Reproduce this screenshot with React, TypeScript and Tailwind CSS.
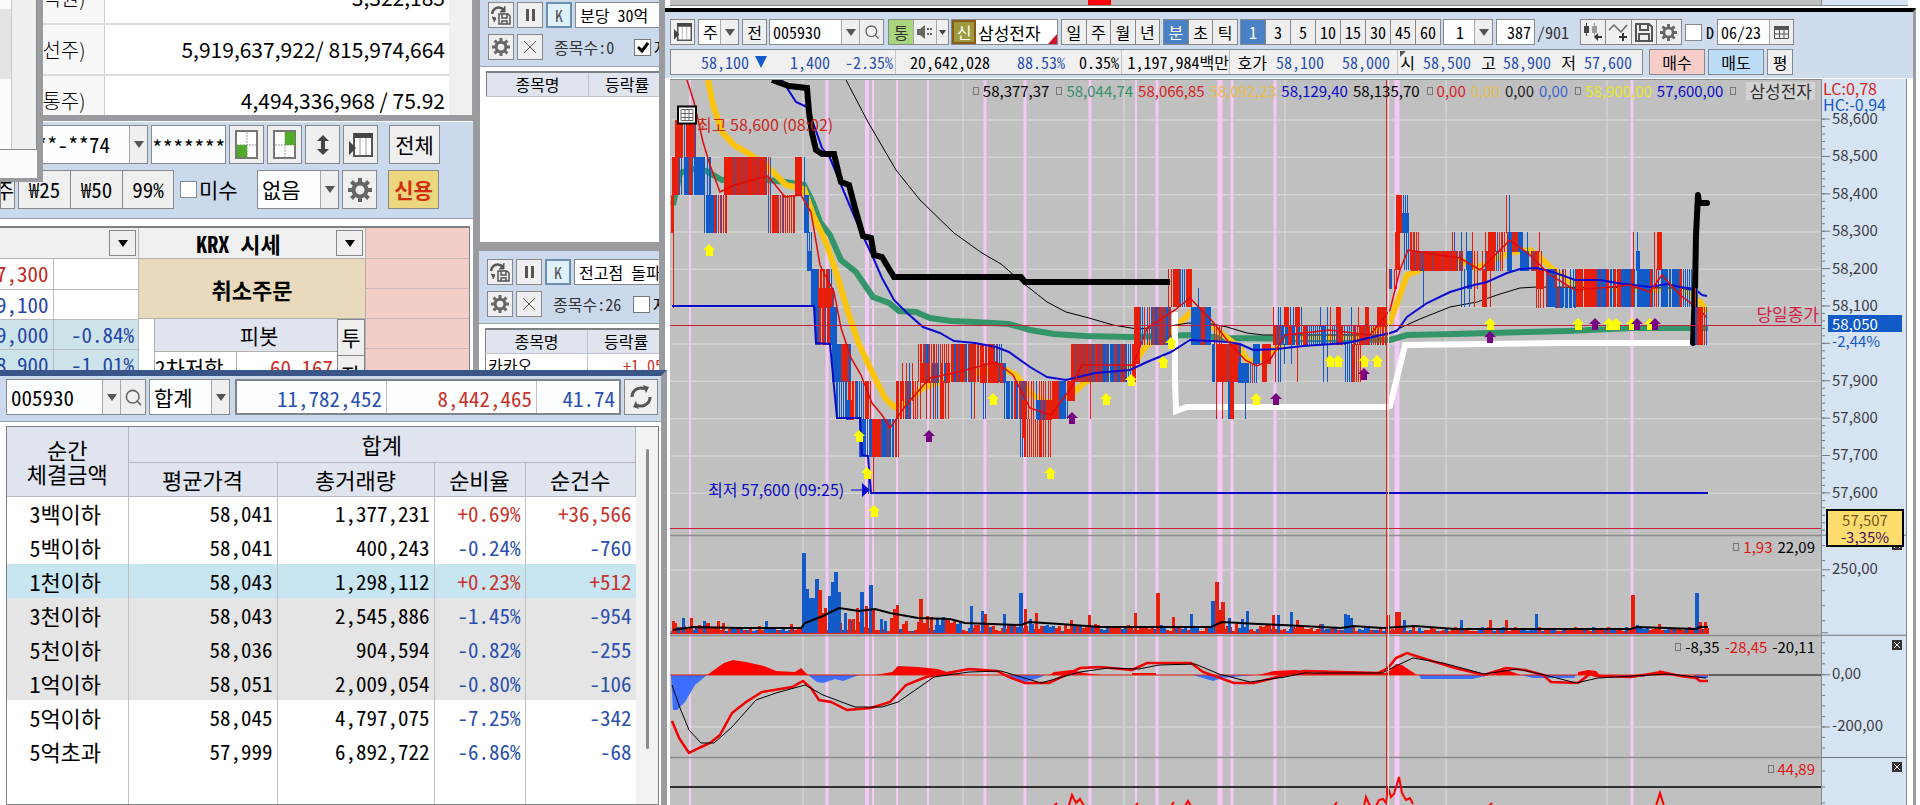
import type { ReactNode } from "react";
import { Search } from "lucide-react";

const SANS = "font-['Noto_Sans_CJK_KR',sans-serif]";

const BTN = "flex shrink-0 items-center justify-center border border-[#85888d] bg-[#efefef]";

const RED = "#e61e0a";
const BLUE = "#125ac8";
const MIX = "#96384e";

/* ---------- icons ---------- */

function Arrow({ className = "fill-[#555]" }: { className?: string }) {
  return (
    <svg width="10" height="7" viewBox="0 0 10 7" className={className}>
      <path d="M0 0h10L5 7z" />
    </svg>
  );
}

function Gear({ size = 18 }: { size?: number }) {
  return (
    <svg width={size} height={size} viewBox="0 0 24 24">
      <circle cx="12" cy="12" r="6.5" fill="none" stroke="#666" strokeWidth="4" />
      {[0, 45, 90, 135].map((a) => (
        <path key={a} d="M10 0h4v5h-4zM10 19h4v5h-4z" fill="#666" transform={`rotate(${a} 12 12)`} />
      ))}
    </svg>
  );
}

function PanelIcon({ size = 18 }: { size?: number }) {
  return (
    <svg width={size} height={size} viewBox="0 0 24 24">
      <path d="M5 1h18v22H5z" fill="#fff" stroke="#555" strokeWidth="2" />
      <path d="M5 0h19v5H5zM0 8l7 7-7 7z" fill="#444" />
      <path d="M11 5v17M17 5v17" stroke="#999" />
    </svg>
  );
}

function QuadIcon({ corner }: { corner: "bl" | "tr" }) {
  return (
    <svg width="24" height="30" viewBox="0 0 24 30">
      <path d="M1 1h21v27H1z" fill="#fff" stroke="#777" strokeWidth="2" />
      <path d="M12 2v25M2 15h19" stroke="#999" strokeDasharray="2 1" />
      <path d={corner === "bl" ? "M2 15h10v12H2z" : "M12 2h10v13H12z"} fill="#4ead24" />
    </svg>
  );
}

function ReloadSave() {
  return (
    <svg width="20" height="20" viewBox="0 0 20 20" fill="none" stroke="#555">
      <path d="M1 9c1-6 7-9 12-4" strokeWidth="2.5" />
      <path d="M14 1v6H9M1 12l4 1-2 4" fill="#555" />
      <path d="M8 9h9l2 2v8H8zM11 9v4h5V9M11 19v-3h5v3" strokeWidth="1.5" />
    </svg>
  );
}

function Save() {
  return (
    <svg width="18" height="19" viewBox="0 0 18 19" fill="none" stroke="#555" strokeWidth="2">
      <path d="M1 1h13l3 3v14H1zM5 1v6h8V1M4 18v-7h10v7" />
    </svg>
  );
}

function CandleAdd() {
  return (
    <svg width="20" height="20" viewBox="0 0 20 20">
      <path d="M1 4h5v7H1zM3 1h1v13H3z" fill="#444" />
      <path d="M9 4h5v7H9zM11 1h1v13h-1z" fill="#999" />
      <path d="M11 15l4-4v3h4v2h-4v3z" fill="#333" />
    </svg>
  );
}

function LineAdd() {
  return (
    <svg width="20" height="20" viewBox="0 0 20 20">
      <path d="M1 8l5-5 7 7 6-7" fill="none" stroke="#666" strokeWidth="1.5" />
      <path d="M11 14h3v-3h2v3h3v2h-3v3h-2v-3h-3z" fill="#333" />
    </svg>
  );
}

function Calendar() {
  return (
    <svg width="15" height="14" viewBox="0 0 15 14" fill="none" stroke="#555">
      <path d="M0 1h15v4H0z" fill="#555" stroke="none" />
      <path d="M.5 1.500h14v12H.5zM5.500 5v8M10 5v8M0 9h15" />
    </svg>
  );
}

function Refresh() {
  return (
    <svg width="24" height="26" viewBox="0 0 24 26" fill="none" stroke="#555" strokeWidth="3">
      <path d="M3 13c0-7 7-11 13-8M21 13c0 7-7 11-13 8" />
      <path d="M14 1l6 2-3 6zM10 25l-6-2 3-6z" fill="#555" stroke="none" />
    </svg>
  );
}

function Speaker() {
  return (
    <svg width="16" height="16" viewBox="0 0 16 16" fill="#666">
      <path d="M0 5h3l5-4v14l-5-4H0zM10 4h2v2h-2zM10 9h2v2h-2zM13 4h2v2h-2zM13 9h2v2h-2z" />
    </svg>
  );
}

/* ---------- small controls ---------- */

function Combo({ label, value, className }: { label: string; value: string; className: string }) {
  return (
    <div className={`flex shrink-0 border border-[#85888d] bg-[#fdfeff] ${className}`}>
      <select aria-label={label} className="min-w-0 flex-1 appearance-none bg-transparent pl-1 leading-none outline-none">
        <option>{value}</option>
      </select>
      <span className="flex w-[18px] items-center justify-center border-l border-[#a5a8ad] bg-[#efefef]">
        <Arrow />
      </span>
    </div>
  );
}

/* ---------- background windows ---------- */

function ShareInfo() {
  const rows = [
    ["(억원)", "3,322,185"],
    ["(우선주)", "5,919,637,922/ 815,974,664"],
    ["(보통주)", "4,494,336,968 / 75.92"],
  ];
  return (
    <section className="absolute top-0 left-0 h-[120px] w-[476px] overflow-hidden border-r-4 border-[#9a9c9f] bg-[#f0f0f0]">
      <table className={`-mt-[27px] w-[449px] table-fixed text-[21px] text-black ${SANS}`}>
        <tbody>
          {rows.map(([k, v]) => (
            <tr key={k} className="h-[51px] border-b-2 border-[#dcdcdc]">
              <th className="w-[104px] border-r border-[#d0d0d0] bg-[#f8f8f8] pr-[18px] text-right text-[20px] font-light whitespace-nowrap">
                <span className="flex justify-end">{k}</span>
              </th>
              <td className="bg-white pr-1 text-right">{v}</td>
            </tr>
          ))}
        </tbody>
      </table>
    </section>
  );
}

function ScrollPopup() {
  return (
    <section className="absolute top-0 left-0 flex h-[182px] w-[43px] flex-col border-r-6 border-b-4 border-[#999b9e] bg-[#fcfcfc]">
      <div className="flex h-[150px] border-r border-b border-[#8a8a8a]">
        <div className="flex w-3 flex-col border-r border-[#c8c8c8] pt-[9px]">
          <div className="h-[70px] bg-[#e4e4e4]" />
        </div>
        <div className="flex-1 bg-[#efefef]" />
      </div>
    </section>
  );
}

function OrderWindow() {
  const quotes = [
    { price: "57,300", rate: "", tone: "text-[#c02a22]", bg: "bg-white" },
    { price: "59,100", rate: "", tone: "text-[#2545a8]", bg: "bg-white" },
    { price: "59,000", rate: "-0.84%", tone: "text-[#2545a8]", bg: "bg-[#cde3ea]" },
    { price: "58,900", rate: "-1.01%", tone: "text-[#2545a8]", bg: "bg-[#cde3ea]" },
  ];
  return (
    <section className="absolute top-[115px] left-0 h-[260px] w-[479px] overflow-hidden border-t-6 border-r-6 border-[#999b9e] bg-white text-[21px] leading-none">
      <div className="flex flex-col gap-[6px] border-t border-b border-t-white border-b-[#9aa0a8] bg-[#cbd9ec] pt-[3px] pb-[9px]">
        <div className="flex h-[39px] gap-[3px]">
          <Combo label="계좌번호" value="**-**-**74" className="w-[148px]" />
          <input aria-label="비밀번호" defaultValue="*******" className="w-[75px] border border-[#85888d] bg-[#fdfeff] pt-1 text-center" />
          <button aria-label="왼쪽 아래" className={`${BTN} w-[35px]`}><QuadIcon corner="bl" /></button>
          <button aria-label="오른쪽 위" className={`${BTN} w-[35px]`}><QuadIcon corner="tr" /></button>
          <button aria-label="높이 조절" className={`${BTN} w-[35px]`}>
            <svg width="14" height="20" viewBox="0 0 14 20" fill="#444"><path d="M7 0l6 6H9v8h4l-6 6-6-6h4V6H1z" /></svg>
          </button>
          <button aria-label="패널" className={`${BTN} w-[35px]`}><PanelIcon size={24} /></button>
          <button className={`${BTN} ml-[8px] w-[51px]`}>전체</button>
        </div>
        <div className="flex h-[39px] items-stretch">
          <button className={`${BTN} w-[15px] justify-end overflow-hidden`}>주</button>
          <button className={`${BTN} ml-[3px] w-[53px]`}>₩25</button>
          <button className={`${BTN} w-[52px] border-l-0`}>₩50</button>
          <button className={`${BTN} w-[51px] border-l-0`}>99%</button>
          <label className="ml-[6px] flex w-[77px] items-center gap-[2px] whitespace-nowrap">
            <input type="checkbox" className="size-[17px] shrink-0 appearance-none border border-[#85888d] bg-white" />
            미수
          </label>
          <Combo label="신용구분" value="없음" className="w-[82px]" />
          <button aria-label="설정" className={`${BTN} ml-[3px] w-[35px]`}><Gear size={24} /></button>
          <button className={`${BTN} ml-[11px] w-[51px] !bg-[#ecd67e] font-bold text-[#d03010]`}>신용</button>
        </div>
      </div>
      <div className="mt-[7px] mr-[3px] flex border-t-2 border-r border-[#7d8085]">
        <div className="w-[139px] shrink-0 border-r border-[#b8b8b8]">
          <div className="flex h-[31px] justify-end border-b border-[#b0b0b0] bg-[#f0f0f0] p-[2px]">
            <button aria-label="호가 선택" className={`${BTN} w-[27px]`}><Arrow className="fill-black" /></button>
          </div>
          <table className="w-full table-fixed text-right">
            <tbody>
              {quotes.map((q) => (
                <tr key={q.price} className={`h-[30px] border-b border-[#b8bcc0] ${q.tone} ${q.bg}`}>
                  <td className="w-[53px] border-r border-[#b8bcc0] pr-1">
                    <span className="flex justify-end">{q.price}</span>
                  </td>
                  <td className="pr-1">{q.rate}</td>
                </tr>
              ))}
            </tbody>
          </table>
        </div>
        <div className="w-[227px] shrink-0 border-r border-[#b0b0b0]">
          <div className="flex h-[31px] items-center border-b border-[#b0b0b0] bg-[#f0f0f0] p-[2px] text-[22px] font-bold">
            <span className="flex-1 text-center">KRX 시세</span>
            <button aria-label="시세 선택" className={`${BTN} h-full w-[27px]`}><Arrow className="fill-black" /></button>
          </div>
          <button className="flex h-[60px] w-full items-center justify-center border-b border-[#b0b0b0] bg-[#e9dabd] text-[22px] font-bold">취소주문</button>
          <div className="flex pl-[15px]">
            <div className="flex-1 border-l border-[#b0b0b0]">
              <div className="flex h-[33px] items-center justify-center border-b border-[#b0b0b0] bg-[#dfe4ee] pl-[26px]">피봇</div>
              <div className="flex h-[30px] items-center">
                <span className="flex h-full w-[82px] items-center border-r border-[#b0b0b0] whitespace-nowrap">2차저항</span>
                <span className="flex-1 pr-1 text-right text-[#d03028]">60,167</span>
              </div>
            </div>
            <div className="w-[28px]">
              <button className={`${BTN} h-[37px] w-full`}>투</button>
              <button className={`${BTN} h-[37px] w-full border-t-0`}>자</button>
            </div>
          </div>
        </div>
        <div className="flex-1">
          {["h-[31px]", "h-[30px]", "h-[30px]", "h-[30px]", "h-[30px]"].map((h, i) => (
            <div key={i} className={`${h} border-b border-[#c8b8b8] bg-[#f3cdc8]`} />
          ))}
        </div>
      </div>
    </section>
  );
}

function SearchWindow({ query, count, checked, className, children }: { query: string; count: string; checked?: boolean; className: string; children?: ReactNode }) {
  return (
    <section className={`absolute w-[184px] overflow-hidden border-[#999b9e] bg-white text-[16px] leading-none ${className}`}>
      <div className="flex flex-col gap-[6px] border-b border-[#9aa0a8] bg-[#cbd9ec] pb-[6px] pl-2">
        <div className="flex h-[26px] gap-[3px]">
          <button aria-label="조건 저장" className={`${BTN} w-[26px]`}><ReloadSave /></button>
          <button aria-label="일시정지" className={`${BTN} w-[26px] gap-[3px]`}>
            <span className="h-3 w-[3px] bg-[#555]" />
            <span className="h-3 w-[3px] bg-[#555]" />
          </button>
          <button className="flex w-[26px] shrink-0 items-center justify-center border-2 border-[#6d8fae] bg-[#dff1fb] text-[#555]">K</button>
          <input aria-label="조건식" defaultValue={query} className="w-[110px] shrink-0 border border-[#85888d] bg-white pl-1" />
        </div>
        <div className="flex h-[26px] items-center gap-[3px]">
          <button aria-label="설정" className={`${BTN} h-full w-[26px]`}><Gear /></button>
          <button aria-label="닫기" className={`${BTN} h-full w-[26px]`}>
            <svg width="12" height="12" viewBox="0 0 12 12" stroke="#555"><path d="M0 0l12 12M12 0L0 12" /></svg>
          </button>
          <span className="ml-[8px] w-[77px] shrink-0 text-[#333]">종목수:{count}</span>
          <label className="flex items-center gap-[3px] whitespace-nowrap">
            <span className="relative flex size-[17px] shrink-0 items-center justify-center border border-[#777] bg-white">
              <input type="checkbox" defaultChecked={checked} className="absolute inset-0 appearance-none" />
              {checked && <svg width="12" height="11" viewBox="0 0 12 11" fill="none" stroke="#000" strokeWidth="3"><path d="M1 5l4 4 6-8" /></svg>}
            </span>
            자동
          </label>
        </div>
      </div>
      <table className="mt-1 ml-[6px] w-[220px] table-fixed border-t-2 border-l border-[#7d8085]">
        <thead>
          <tr className="h-6 border-b border-[#c0c4ca] bg-[#dfe4ee]">
            <th className="w-[102px] border-r border-[#c0c4ca] font-normal">종목명</th>
            <th className="pl-4 text-left font-normal">등락률</th>
          </tr>
        </thead>
        <tbody>{children}</tbody>
      </table>
    </section>
  );
}

/* ---------- trades by size ---------- */

const TRADES = [
  ["3백이하", "58,041", "1,377,231", "+0.69%", "+36,566", ""],
  ["5백이하", "58,041", "400,243", "-0.24%", "-760", ""],
  ["1천이하", "58,043", "1,298,112", "+0.23%", "+512", "bg-[#c8e6f1]"],
  ["3천이하", "58,043", "2,545,886", "-1.45%", "-954", "bg-[#e5e5e5]"],
  ["5천이하", "58,036", "904,594", "-0.82%", "-255", "bg-[#e5e5e5]"],
  ["1억이하", "58,051", "2,009,054", "-0.80%", "-106", "bg-[#e5e5e5]"],
  ["5억이하", "58,045", "4,797,075", "-7.25%", "-342", ""],
  ["5억초과", "57,999", "6,892,722", "-6.86%", "-68", ""],
];

function TradesWindow() {
  const tone = (v: string) => (v.startsWith("+") ? "text-[#c8322c]" : "text-[#2a50b0]");
  const th = "border-r border-b border-[#b4b8be] font-normal";
  const td = "border-r border-[#c0c0c0] pr-1";
  return (
    <section className="absolute top-[370px] bottom-0 left-0 flex w-[667px] flex-col border-t-6 border-r-6 border-t-[#3a5587] border-r-[#999b9e] bg-white text-[21px] leading-none">
      <div className="flex h-[46px] items-start border-b border-[#9aa0a8] bg-[#cbd9ec] pt-[3px] pl-[6px]">
        <div className="flex h-[36px] w-[140px] border border-[#85888d] bg-[#fdfeff]">
          <input aria-label="종목코드" defaultValue="005930" className="w-[95px] pl-1" />
          <button aria-label="종목 목록" className="flex w-[18px] items-center justify-center border-l border-[#a5a8ad] bg-[#efefef]"><Arrow /></button>
          <button aria-label="종목 검색" className="flex flex-1 items-center justify-center border-l border-[#a5a8ad] bg-[#efefef]">
            <Search size={19} color="#666" />
          </button>
        </div>
        <Combo label="구분" value="합계" className="ml-[3px] h-[36px] w-[81px]" />
        <div className="ml-[5px] flex h-[36px] w-[386px] items-stretch border-2 border-[#7f838a] bg-[#fdfeff] text-right text-[#2a50b0]">
          <span className="w-[149px] pt-[7px] pr-1">11,782,452</span>
          <span className="w-[150px] border-l border-[#c0c0c0] pt-[7px] pr-1 text-[#c8322c]">8,442,465</span>
          <span className="flex-1 border-l border-[#c0c0c0] pt-[7px] pr-1">41.74</span>
        </div>
        <button aria-label="새로고침" className={`${BTN} ml-[3px] h-[36px] w-[34px]`}><Refresh /></button>
      </div>
      <div className="mt-[4px] mr-[2px] ml-[6px] flex flex-1 border border-[#7d8085]">
        <table className="h-full w-[629px] shrink-0 table-fixed text-right">
          <colgroup>
            <col className="w-[121px]" />
            <col className="w-[149px]" />
            <col className="w-[157px]" />
            <col className="w-[91px]" />
            <col />
          </colgroup>
          <thead className="text-[22px]">
            <tr className="h-[35px] bg-[#dfe4ee] text-center">
              <th rowSpan={2} className={`${th} leading-[24px]`}>순간<br />체결금액</th>
              <th colSpan={4} className={th}>합계</th>
            </tr>
            <tr className="h-[34px] bg-[#dfe4ee] text-center">
              <th className={th}>평균가격</th>
              <th className={th}>총거래량</th>
              <th className={th}>순비율</th>
              <th className={th}>순건수</th>
            </tr>
          </thead>
          <tbody>
            {TRADES.map(([name, avg, vol, ratio, cnt, bg]) => (
              <tr key={name} className={`h-[34px] ${bg}`}>
                <td className={`${td} text-center text-[22px]`}>{name}</td>
                <td className={td}>{avg}</td>
                <td className={td}>{vol}</td>
                <td className={`${td} ${tone(ratio)}`}>{ratio}</td>
                <td className={`pr-1 ${tone(cnt)}`}>{cnt}</td>
              </tr>
            ))}
            <tr>
              <td className={td} />
              <td className={td} />
              <td className={td} />
              <td className={td} />
              <td />
            </tr>
          </tbody>
        </table>
        <div className="flex flex-1 justify-center bg-[#f2f2f2] pt-[22px]">
          <div className="h-[300px] w-[3px] rounded bg-[#8a8a8a]" />
        </div>
      </div>
    </section>
  );
}

/* ---------- chart data ---------- */

// Plot space: x 670-1821, y 80-805. Prices are given as an offset from 57,000.
const X0 = 670;
const Y0 = 80;
const W = 1151;
const H = 725;
const py = (p: number) => 120 + (1600 - p) * 0.3733;

// x, high, low, then one letter per column: r up, b down, p both, "." nothing
type Run = [number, number, number, string];
const RUNS: Run[] = [
  [671, 1400, 1300, "rrr"],
  [673, 1300, 1100, "r"],
  [672, 1500, 1400, "rrrrrrr"],
  [675, 1600, 1500, "rrrrrrrr.b.rrrrrrrrrb"],
  [679, 1500, 1400, "b.b..bbbbbrrrb.bbbbbbbbbbb..b.bb"],
  [704, 1400, 1300, "b.bbbbbbbbrrb.r.rb.r.rr"],
  [724, 1500, 1400, "rrrrrrrrrpppprrrrpprrpprrrrrrprrrpprrrrrrpp.r.b"],
  [768, 1400, 1300, "b.r.rrrrrpr.r.rb.r.r.r.r.rr"],
  [795, 1500, 1400, "rrrrrrr..b"],
  [804, 1400, 1300, "bbbbb"],
  [807, 1300, 1200, "b.b.b"],
  [807, 1250, 1200, "bbbbb"],
  [811, 1200, 1100, "bbbbbbbr.rr.rr.rrrb.b"],
  [819, 1150, 1100, "rrrr.rrrrrrrrrb"],
  [815, 1100, 1000, "bbbbrr.rrrb.rrrbbbbbbb"],
  [832, 1000, 900, "bbbbbbbbbprrrrrppbb"],
  [836, 900, 800, "bb.b.b.b.bb.rrr.rr.rbb.b.b.b.rrrr.r"],
  [846, 850, 800, "bbbbrrrr"],
  [859, 800, 700, "bbbbbbb.b.bbbrrrrrrrrppbbbbbppbb.bb.rr.r"],
  [868, 700, 600, "b....r"],
  [896, 900, 800, "rrr.rr.r.rbbrbb..r.r.r..r"],
  [902, 950, 850, "r...r..b..r"],
  [918, 1000, 900, "r.rr.pppbbrb.r.rr.r.b.r.r.r.r.r"],
  [921, 950, 900, "rrrrppprr.rrbbrrbb.rrr.bbrrrr"],
  [918, 900, 800, "..r.....r...r..b.r.b..rrrr.r..r"],
  [951, 1000, 900, "rrrbbrrrbrrrrrbb.pprrprrr.rr.rrrr.rr.rrrrrrb.rb.b.b"],
  [971, 900, 800, "b..r........b.b"],
  [980, 950, 900, "rrrrrrr.rrrrrrrrrrr.rrrbbb"],
  [1004, 900, 800, "b.bbbb.bb.rrbb.rrbb.b"],
  [1020, 800, 700, "b.b.rr.r.r.r.r.r.r.rrr.r.r..r.r"],
  [1022, 750, 850, "rrrr"],
  [1023, 900, 800, "r.rr.r..r.r..b..r.r.r.r..r.r.rrrrrrrbbbbbbb.b"],
  [1037, 850, 800, "bbbbrrbbrrr.rrr"],
  [1067, 900, 850, "rrrrrrrr"],
  [1071, 1000, 900, "rrrppprrprpprpprrppprbppprrbrrppbbbpbb.bbbbpprbbbppprrbb.b.b.rrrr"],
  [1090, 900, 800, "r"],
  [1134, 1100, 950, "rrrrrr"],
  [1140, 1100, 1000, "b.b.r..b.r.bpppbbppprpppppbbppp"],
  [1168, 1200, 1100, "r..r"],
  [1173, 1200, 1100, "rrrrrrpb.b.b.rrrrrr"],
  [1198, 1150, 1100, "b"],
  [1191, 1100, 1000, "bbbbbbbbbbrrrrbbbbbb"],
  [1212, 1000, 900, "bbb.rrrrrrrrrrrpprrrrrrrrrrbb"],
  [1214, 1050, 1000, "r.r..r.r"],
  [1238, 950, 900, "bbbbbbbbbbb.b.r.b.b"],
  [1216, 900, 800, "r.....r.....bbrrrr...........b"],
  [1253, 1000, 950, "bbbbbbb.."],
  [1262, 1000, 900, "rrrrr"],
  [1265, 1000, 950, "rrrrrr"],
  [1273, 1100, 1000, "r"],
  [1275, 1000, 900, "r..b.b"],
  [1273, 1050, 1000, "rrrrbpppbbb.bbbrrrrbbb.rrbb.b.rrrrb"],
  [1278, 1100, 1050, "b.b...rrrrr.b..b.rrrrr.b"],
  [1284, 1000, 950, "b......b"],
  [1297, 1000, 900, "r"],
  [1307, 1050, 1000, "b.b.b.b.b.b.b.bbbbb.b"],
  [1320, 1100, 1050, "b......b..r"],
  [1323, 1000, 900, "b...b"],
  [1330, 1050, 1000, "r.b.b.brrrrrr.b..b.b.b.rrb.r"],
  [1336, 1100, 1050, "rrrrr..........b......r"],
  [1345, 1000, 900, "b.b.b.brrr.r.r.r"],
  [1359, 1050, 1000, "rrrrrpprrrr.b.r.r"],
  [1365, 1100, 1050, "rrrr"],
  [1377, 1100, 1050, "rrrrrrrrr"],
  [1377, 1050, 1000, "rr.r.rr.r"],
  [1388, 1200, 1000, "r.."],
  [1389, 1200, 1150, "rbb"],
  [1395, 1300, 1200, "rrrrr"],
  [1394, 1200, 1150, "r.r"],
  [1396, 1400, 1300, "rrrrrr.b.b.b"],
  [1402, 1350, 1300, "bbbbbbb"],
  [1404, 1300, 1200, "b.b.b.rr.rr.r.r"],
  [1411, 1250, 1200, "rrrpprr.pppbrrrrrrrrrpprrrrrrrrprrrrrrrprrrrrpp.rrrr"],
  [1423, 1200, 1100, "b"],
  [1452, 1300, 1250, "r.b"],
  [1461, 1300, 1200, "b....b.....r"],
  [1461, 1200, 1100, "b..b....b....r"],
  [1467, 1250, 1150, "bbbbb"],
  [1474, 1250, 1150, "r..r....r"],
  [1482, 1200, 1100, "rrrrr...r"],
  [1485, 1250, 1200, "brrrrrrrrr.b.b.r.r"],
  [1485, 1300, 1250, "r..rrrrrrrr.b.r.rr.r"],
  [1506, 1400, 1300, "r..b"],
  [1507, 1300, 1250, "rbbbbrrprrrbbbbb....b"],
  [1507, 1250, 1200, "bbbbb"],
  [1520, 1250, 1200, "bbbbbbbbb..pppprrrr..r"],
  [1539, 1300, 1250, "r"],
  [1536, 1200, 1150, "rrrrrrrr"],
  [1536, 1150, 1100, "r.r.r..r"],
  [1546, 1200, 1100, "rbbbbbbbbrr..b..rb.r....b..b.b"],
  [1555, 1150, 1100, "bbrbrbbb..bbb.bbb..bb"],
  [1576, 1200, 1100, "rrrrrrr.rrrrrrrrrrrrrbbbbpbbbbb"],
  [1606, 1200, 1100, "rrr.bb.brr.rrrrbbbbbbbbbbrrrb..bbbbbbbbbbbbbrrb.r.r.b..b"],
  [1633, 1300, 1200, "r...b"],
  [1636, 1250, 1200, "bbbb"],
  [1654, 1300, 1200, "r..rrrrr"],
  [1662, 1200, 1100, "bbbbbb.bb.bbbbbbbprr.b.b.b.b.b"],
];

const LAST_RUNS: Run[] = [
  [1695, 1150, 1100, "r.b"],
  [1695, 1100, 1000, "bbrrrrrr.r.b"],
];

const GRID_X = [803, 963, 1124, 1285, 1446, 1607];
const PINK = [[690, 2], [827, 3], [867, 4], [873, 2], [897, 2], [928, 2], [985, 3], [1025, 3], [1090, 3], [1136, 2], [1157, 3], [1220, 5], [1232, 3], [1275, 3], [1397, 5], [1632, 3]];

const LINES = {
  green: "673,205 680,173 692,169 706,171 722,180 745,178 768,180 785,182 804,185 813,203 820,222 830,235 841,260 856,272 873,297 889,303 899,311 916,312 930,318 951,321 975,322 1009,324 1030,330 1054,334 1085,336 1130,337 1190,335 1227,338 1390,340 1407,335 1453,334 1527,332 1567,331 1633,328 1708,328",
  yellow: "708,80 713,105 722,132 734,145 748,153 768,167 786,185 804,189 813,215 827,245 837,275 848,312 858,342 872,372 885,398 894,407 906,402 923,388 951,378 975,373 1001,368 1016,375 1030,393 1047,403 1071,395 1085,382 1113,372 1130,368 1147,345 1164,338 1190,313 1213,327 1240,348 1248,362 1263,357 1293,337 1327,337 1360,337 1390,322 1397,303 1407,275 1420,270 1443,260 1460,260 1477,268 1493,260 1513,252 1530,250 1543,260 1550,267 1575,285 1600,288 1650,290 1680,288 1700,302 1707,312",
  white: "1175,312 1175,378 1176,411 1187,407 1387,407 1390,406 1405,345 1560,343 1692,343",
  blue: "782,80 796,102 807,107 815,128 822,148 830,158 844,192 861,232 872,255 882,278 894,300 906,312 923,327 940,333 954,341 975,343 996,347 1009,352 1030,367 1047,377 1066,380 1095,373 1130,370 1147,362 1171,352 1190,340 1212,341 1228,342 1240,344 1253,350 1277,349 1303,346 1347,343 1390,333 1397,331 1407,317 1427,303 1450,292 1470,286 1487,282 1507,273 1520,269 1537,268 1553,272 1575,280 1600,280 1617,283 1650,287 1667,284 1680,287 1695,289 1702,295 1707,296",
  low: "672,306 814,306 816,343 830,344 837,418 860,418 862,455 868,456 871,493 1708,493",
  thin: "846,80 868,122 896,170 920,200 954,233 982,253 1001,264 1023,283 1047,302 1066,312 1089,318 1113,325 1137,329 1164,327 1188,323 1212,324 1227,327 1247,333 1263,335 1387,335 1400,328 1420,319 1450,307 1477,302 1500,294 1520,288 1537,287 1680,288 1695,291",
  thick: "772,80 789,86 807,88 809,112 812,133 816,150 822,154 834,154 839,175 841,182 849,185 855,208 863,236 871,238 874,255 882,257 894,277 1021,277 1025,282 1170,282",
  red: "687,80 694,102 703,142 710,165 720,192 734,185 768,176 785,197 801,195 811,212 820,265 834,292 841,328 851,358 861,375 872,403 882,415 890,428 906,405 930,378 958,372 996,362 1013,375 1030,408 1051,415 1071,388 1082,365 1133,365 1147,328 1175,310 1190,298 1213,322 1227,340 1245,360 1257,366 1270,360 1285,335 1330,330 1370,335 1390,310 1400,270 1408,250 1440,255 1460,258 1480,270 1500,250 1510,240 1530,255 1550,275 1575,290 1600,288 1630,285 1650,292 1662,275 1680,295 1700,310 1707,318",
  volume: "673,630 693,627 740,628 801,628 805,623 823,616 839,608 859,611 875,609 890,613 918,618 950,619 965,623 1021,625 1029,622 1060,624 1100,627 1211,627 1222,622 1258,624 1282,625 1341,628 1353,626 1382,628 1415,626 1455,629 1631,629 1637,627 1696,629 1700,627 1708,627",
  macd: "672,721 679,738 689,753 699,748 710,743 720,735 732,713 746,702 762,692 792,687 803,681 811,688 819,700 831,702 847,710 871,708 890,702 906,685 926,677 942,674 969,669 997,671 1009,677 1025,683 1049,683 1080,668 1100,667 1132,670 1147,663 1191,663 1203,672 1234,683 1254,683 1285,675 1304,671 1378,673 1388,668 1396,658 1407,653 1419,657 1455,668 1484,675 1506,668 1525,670 1543,675 1551,682 1578,683 1590,674 1596,676 1631,677 1662,672 1680,676 1696,678 1700,681 1708,681",
  signal: "672,685 680,708 689,730 701,743 714,743 732,727 756,700 776,693 805,685 823,695 855,707 882,707 898,702 934,677 969,672 1001,671 1041,683 1080,672 1108,668 1139,669 1159,665 1195,664 1219,674 1250,682 1285,677 1304,673 1382,673 1398,665 1413,658 1443,663 1484,674 1517,669 1545,675 1576,683 1598,678 1668,674 1706,678",
};

const HIST_UP = "M707 675L724 663 733 660 746 662 764 666 776 671 795 672 801 668 808 675zM875 675L892 672 898 666 918 667 938 669 950 673 965 675zM1049 675L1054 672 1072 670 1084 673 1102 675zM1132 675v-2h24v2zM1258 675L1274 671 1296 670 1313 673 1387 673 1396 664 1402 665 1417 675zM1490 675L1504 669 1521 675zM1578 675v-3L1588 670 1596 671 1600 675zM1655 675L1660 670 1668 675z";
const HIST_DOWN = "M671 675L673 710H677L685 702 695 685 707 675zM808 675L817 682 823 683 835 679 843 681 859 675zM1003 675L1025 682 1039 678 1045 675zM1193 675L1213 681 1222 678 1254 675zM1419 675L1421 679H1472L1490 675zM1521 675L1533 678H1574L1576 675zM1605 675v2h40v-2zM1694 675v3h14v-3z";
const STRENGTH = "M1054 806l3-3M1069 805l3-10 4 8 4-4 4 7M1135 806l3-3M1171 806l3-4M1185 806l3-5 3 5M1334 806l3-4M1364 806l2-9 3 7 2 2M1376 806l3-6 4-1 3 4 2-16 3 10 3-3 5-17 3 16 4 7 4-2 3 6M1489 806l3-3M1656 806l4-13 4 13";

// x, height, colour
const SPIKES: [number, number, string][] = [
  [672, 12, "r"], [682, 15, "b"], [690, 15, "r"], [703, 12, "b"], [717, 12, "r"], [722, 10, "r"], [765, 12, "b"], [790, 9, "r"],
  [802, 80, "b"], [805, 44, "b"], [808, 35, "b"], [811, 35, "b"], [815, 54, "b"], [818, 43, "r"], [821, 20, "r"], [824, 25, "r"], [828, 37, "b"], [831, 51, "b"],
  [834, 61, "b"], [837, 41, "b"], [844, 20, "b"], [848, 14, "r"], [852, 14, "r"], [856, 25, "r"], [860, 41, "b"], [865, 27, "r"],
  [869, 48, "b"], [872, 24, "r"], [880, 14, "b"], [890, 15, "r"], [893, 24, "r"], [896, 28, "r"], [905, 12, "r"], [919, 34, "r"],
  [926, 17, "r"], [930, 16, "r"], [936, 14, "b"], [942, 16, "b"], [947, 14, "r"], [970, 27, "b"], [981, 22, "b"], [984, 19, "r"], [1003, 19, "b"],
  [1019, 40, "b"], [1024, 24, "r"], [1029, 14, "b"], [1035, 20, "r"], [1070, 13, "r"], [1088, 18, "r"], [1134, 20, "r"], [1156, 40, "r"],
  [1172, 16, "r"], [1190, 19, "b"], [1211, 32, "b"], [1215, 51, "r"], [1218, 23, "r"], [1221, 31, "r"], [1228, 15, "b"],
  [1241, 14, "b"], [1246, 22, "b"], [1272, 18, "r"], [1277, 18, "b"], [1290, 21, "b"], [1296, 13, "r"], [1321, 9, "b"],
  [1344, 19, "b"], [1347, 18, "b"], [1350, 15, "b"], [1387, 18, "r"], [1395, 21, "r"], [1398, 21, "r"], [1403, 13, "b"],
  [1460, 13, "b"], [1489, 13, "r"], [1505, 13, "r"], [1535, 19, "b"], [1631, 38, "r"], [1636, 8, "b"], [1658, 9, "r"],
  [1695, 40, "b"], [1699, 11, "r"], [1704, 11, "r"],
];

const BASE_VOLUME = Array.from({ length: 346 }, (_, i) => {
  const x = 671 + i * 3;
  const n = (i * 37 + ((i * i) % 11) * 13) % 17;
  const cap = x < 730 ? 9 : x < 800 ? 5 : x < 960 ? 12 : x < 1320 ? 7 : 4;
  return { x, h: 2 + (n / 17) * cap, up: (i * 7 + n) % 5 > 1 };
});

const BUY = [[709, 244], [859, 430], [867, 467], [874, 505], [993, 393], [1050, 467], [1106, 393], [1131, 374], [1163, 356], [1171, 337], [1256, 393], [1330, 355], [1338, 355], [1364, 355], [1377, 355], [1490, 318], [1578, 318], [1609, 318], [1616, 318], [1632, 318], [1650, 318]];
const STRONG = [[929, 430], [1072, 412], [1276, 393], [1364, 368], [1490, 331], [1595, 318], [1637, 318], [1655, 318]];

function Candles({ runs }: { runs: Run[] }) {
  const fill: Record<string, string> = { r: RED, b: BLUE, p: MIX };
  return (
    <g shapeRendering="crispEdges">
      {runs.flatMap(([x, hi, lo, cols], i) =>
        Array.from(cols.matchAll(/r+|b+|p+/g)).map((m) => (
          <rect
            key={`${i}-${m.index}`}
            x={x + m.index}
            y={Math.round(py(Math.max(hi, lo)))}
            width={m[0].length}
            height={Math.round(Math.abs(hi - lo) * 0.3733) + 1}
            fill={fill[m[0][0]]}
          />
        )),
      )}
    </g>
  );
}

function Plot() {
  return (
    <svg className="absolute inset-0 size-full" viewBox={`${X0} ${Y0} ${W} ${H}`} preserveAspectRatio="none" fill="none">
      <g stroke="#d2d2d2" strokeWidth="1.5">
        {[1600, 1500, 1400, 1300, 1200, 1100, 1000, 900, 800, 700, 600].map((p) => (
          <path key={p} d={`M670 ${py(p)}H1821`} />
        ))}
        <path d="M670 570H1821M670 727H1821" />
        {GRID_X.map((x) => (
          <path key={x} d={`M${x} 80V805`} />
        ))}
      </g>
      {PINK.map(([x, w]) => (
        <rect key={x} x={x - w / 2} y="80" width={w} height="725" fill="#f5c8f5" />
      ))}
      <polyline points={LINES.green} stroke="#35956a" strokeWidth="6" />
      <polyline points={LINES.yellow} stroke="#fdc40e" strokeWidth="6" />
      <polyline points={LINES.white} stroke="#fff" strokeWidth="6" />
      <polyline points={LINES.thin} stroke="#000" />
      <Candles runs={RUNS} />
      <polyline points={LINES.blue} stroke="#0a0ad2" strokeWidth="2" />
      <polyline points={LINES.low} stroke="#0a0ac8" strokeWidth="2" />
      <polyline points={LINES.red} stroke="#e10a0a" strokeWidth="1.5" />
      <polyline points={LINES.thick} stroke="#000" strokeWidth="6" />
      <path d="M1707 203H1699L1698 195L1696 235L1695 290L1693 343" stroke="#000" strokeWidth="6" strokeLinecap="round" strokeLinejoin="round" />
      <Candles runs={LAST_RUNS} />
      <path d="M670 325.5H1821M670 528.5H1821" stroke="#c81e3c" />
      {BUY.map(([x, y]) => (
        <path key={`${x}-${y}`} d={`M${x} ${y}l6 6h-2v6h-7v-6h-3z`} fill="#ff0" />
      ))}
      {STRONG.map(([x, y]) => (
        <path key={`${x}-${y}`} d={`M${x} ${y}l6 6h-3v6h-6v-6h-3z`} fill="#780082" />
      ))}
      <path d="M851 490H862" stroke="#0a0ad2" />
      <path d="M862 483l8 7-8 7z" fill="#0a0ad2" />
      <g>
        <path d="M678 106.500h18v17h-18z" fill="#fff" stroke="#000" strokeWidth="2" />
        <path d="M681 109.500h12v11h-12zM685 109v12M689 109v12M681 113.500h12M681 117.500h12" stroke="#666" />
      </g>

      <g shapeRendering="crispEdges">
        {BASE_VOLUME.map((v) => (
          <rect key={v.x} x={v.x} y={633 - v.h} width="3" height={v.h} fill={v.up ? RED : BLUE} />
        ))}
        {SPIKES.map(([x, h, c]) => (
          <rect key={x} x={x} y={633 - h} width={h > 28 ? 4 : 3} height={h} fill={c === "r" ? RED : BLUE} />
        ))}
      </g>
      <path d="M670 633.500H1709" stroke={RED} />
      <polyline points={LINES.volume} stroke="#000" strokeWidth="2" />

      <path d={HIST_UP} fill="#f00" />
      <path d={HIST_DOWN} fill="#3c6eff" />
      <path d="M670 675H1709" stroke={RED} />
      <path d="M1709 675H1821" stroke="#000" />
      <polyline points={LINES.macd} stroke="#f00000" strokeWidth="2.500" />
      <polyline points={LINES.signal} stroke="#000" />

      <path d="M670 787H1821" stroke="#000" strokeWidth="1.500" />
      <path d={STRENGTH} stroke="#f00" strokeWidth="2" />

      <path d="M670 535.500H1821M670 635.500H1821M670 757.500H1821" stroke="#8c8c90" strokeWidth="1.500" />
      <path d="M1386.500 80V805" stroke="#e02020" />
      <path d="M1388.500 80V805" stroke="#f4dede" />
    </svg>
  );
}

/* ---------- chart chrome ---------- */

const top = (y: number) => ({ top: `${((y - Y0) / H) * 100}%` });

type Item = [string, string];
const PRICE_LEGEND: Item[] = [
  ["", ""], ["58,377,37", "text-black"], ["", ""], ["58,044,74", "text-[#359068]"], ["58,066,85", "text-[#d81e1e]"], ["58,092,23", "text-[#e6be46]"],
  ["58,129,40", "text-[#0a0ac8]"], ["58,135,70", "text-black"], ["", ""], ["0,00", "text-[#d81e1e]"], ["0,00", "text-[#e6be46]"], ["0,00", "text-[#222]"],
  ["0,00", "text-[#3c64d2]"], ["", ""], ["58,900,00", "text-[#e6e61e]"], ["57,600,00", "text-[#0a0ac8]"], ["", ""],
];

function Legend({ y, items, children }: { y: number; items: Item[]; children?: ReactNode }) {
  return (
    <div className={`absolute right-[6px] flex items-center gap-[5px] text-[15px] leading-[20px] whitespace-nowrap ${SANS}`} style={top(y)}>
      {items.map(([text, tone], i) =>
        text ? <span key={i} className={tone}>{text}</span> : <span key={i} className="-mr-px ml-[2px] h-2 w-[6px] border border-[#777]" />,
      )}
      {children}
    </div>
  );
}

function Axis() {
  const prices = [1600, 1500, 1400, 1300, 1200, 1100, 900, 800, 700, 600];
  const label = "absolute left-[10px] -translate-y-1/2 leading-[16px] text-[#3c3c46]";
  const minor: number[] = [];
  for (let y = 120; y < 535; y += 7.466) minor.push(y);
  for (let y = 546; y < 634; y += 15) minor.push(y);
  for (let y = 643; y < 757; y += 10.5) minor.push(y);
  minor.push(771, 787, 803);
  return (
    <div className={`relative w-[86px] shrink-0 overflow-hidden border-r border-l border-[#85888d] bg-[#d6e3f2] text-[15px] ${SANS}`}>
      <svg className="absolute inset-y-0 left-0 h-full w-[86px]" viewBox="0 80 86 725" preserveAspectRatio="none" stroke="#777a80">
        {minor.map((y) => <path key={y} d={`M0 ${y}h3`} />)}
        {[...prices, 1000].map((p) => <path key={p} d={`M0 ${py(p)}h8`} />)}
        <path d="M0 570h8M0 633h6M0 675h8M0 727h8M0 535.500h86M0 635.500h86M0 757.500h86" />
      </svg>
      {prices.map((p) => (
        <span key={p} className={label} style={top(py(p) - 1)}>{(57000 + p).toLocaleString("en-US")}</span>
      ))}
      <span className={label} style={top(568)}>250,00</span>
      <span className={label} style={top(673)}>0,00</span>
      <span className={label} style={top(725)}>-200,00</span>
      {[540, 640, 762].map((y) => (
        <button key={y} aria-label="지표 닫기" className="absolute right-[4px] flex size-[10px] items-center justify-center bg-[#333]" style={top(y)}>
          <svg width="6" height="6" viewBox="0 0 6 6" stroke="#fff"><path d="M0 0l6 6M6 0L0 6" /></svg>
        </button>
      ))}
      <div className="absolute top-0 right-0 left-0 bg-[#d6e3f2] pt-px pl-px text-[16px] leading-[16px]">
        <div className="text-[#d81e1e]">LC:0,78</div>
        <div className="text-[#145ac8]">HC:-0,94</div>
      </div>
      <div className="absolute right-1 left-[6px] leading-[17px]" style={top(316)}>
        <div className="bg-[#125ac8] pl-1 text-white">58,050</div>
        <div className="pl-1 text-[#145ac8]">-2,44%</div>
      </div>
      <div className="absolute right-[2px] left-[4px] border-2 border-black bg-[#ffdc6e] text-center leading-[17px]" style={top(509)}>
        <div className="text-[#6b5a14]">57,507</div>
        <div className="text-[#3c1464]">-3,35%</div>
      </div>
    </div>
  );
}

function ButtonGroup({ items, active, className }: { items: string[]; active?: string; className: string }) {
  return (
    <div className={`flex shrink-0 divide-x divide-[#85888d] border border-[#85888d] ${className}`}>
      {items.map((t) => (
        <button key={t} className={`min-w-0 flex-1 ${t === active ? "bg-[#4a80c4] text-white" : "bg-[#efefef]"}`}>{t}</button>
      ))}
    </div>
  );
}

function Toolbar() {
  return (
    <div className="flex h-[26px] items-stretch">
      <button aria-label="패널" className={`${BTN} w-[25px]`}><PanelIcon /></button>
      <Combo label="구분" value="주" className="ml-[3px] w-[41px]" />
      <button className={`${BTN} ml-[3px] w-[25px]`}>전</button>
      <div className="ml-[2px] flex w-[115px] shrink-0 border border-[#85888d] bg-white">
        <input aria-label="종목코드" defaultValue="005930" className="w-[71px] pl-[3px]" />
        <button aria-label="종목 목록" className="flex w-[18px] items-center justify-center border-l border-[#a5a8ad] bg-[#efefef]"><Arrow /></button>
        <button aria-label="종목 검색" className="flex flex-1 items-center justify-center border-l border-[#a5a8ad] bg-[#efefef]"><Search size={16} color="#666" /></button>
      </div>
      <div className="ml-[4px] flex w-[61px] shrink-0 border border-[#85888d] bg-[#efefef]">
        <button className="w-[24px] bg-[#a9d67c] text-[#333]">통</button>
        <button aria-label="소리" className="flex w-[23px] items-center justify-center border-l border-[#a5a8ad]"><Speaker /></button>
        <button aria-label="소리 목록" className="flex flex-1 items-center justify-center border-l border-[#a5a8ad]">
          <svg width="7" height="5" viewBox="0 0 7 5"><path d="M0 0h7L3.500 5z" fill="#444" /></svg>
        </button>
      </div>
      <div className="ml-[2px] flex w-[107px] shrink-0 border border-[#85888d] bg-white">
        <span className="flex w-[24px] items-center justify-center border-2 border-[#8a5a14] bg-[#9c9a3c] text-white">신</span>
        <span className="flex flex-1 items-center pl-[2px] text-[17px]">삼성전자</span>
        <svg width="9" height="10" viewBox="0 0 9 10" className="-ml-[9px] self-end"><path d="M9 0v10H0z" fill="#d21428" /></svg>
      </div>
      <ButtonGroup items={["일", "주", "월", "년"]} className="ml-[3px] w-[99px]" />
      <ButtonGroup items={["분", "초", "틱"]} active="분" className="ml-[3px] w-[75px]" />
      <ButtonGroup items={["1", "3", "5", "10", "15", "30", "45", "60"]} active="1" className="ml-[2px] w-[201px]" />
      <Combo label="주기" value="1" className="ml-[2px] w-[50px] [&_select]:pl-[12px]" />
      <input aria-label="봉 개수" defaultValue="387" className="ml-[3px] w-[39px] border border-[#85888d] bg-white pr-[3px] text-right" />
      <span className="flex items-center pl-[2px] text-[#333]">/901</span>
      <div className="ml-[11px] flex w-[102px] divide-x divide-[#85888d] border border-[#85888d] bg-[#efefef]">
        <button aria-label="종목 추가" className="flex flex-1 items-center justify-center"><CandleAdd /></button>
        <button aria-label="지표 추가" className="flex flex-1 items-center justify-center"><LineAdd /></button>
        <button aria-label="저장" className="flex flex-1 items-center justify-center"><Save /></button>
        <button aria-label="설정" className="flex flex-1 items-center justify-center"><Gear size={17} /></button>
      </div>
      <label className="ml-[3px] flex items-center gap-[4px]">
        <input type="checkbox" className="size-[17px] appearance-none border border-[#85888d] bg-white" />
        D
      </label>
      <div className="ml-[3px] flex w-[77px] border border-[#85888d] bg-white">
        <input aria-label="날짜" defaultValue="06/23" className="w-[51px] pl-[3px]" />
        <button aria-label="달력" className="flex flex-1 items-center justify-center border-l border-[#a5a8ad] bg-[#efefef]"><Calendar /></button>
      </div>
    </div>
  );
}

function QuoteBar() {
  const blue = "text-[#2a50b0]";
  const sep = "h-full border-l border-[#c4c4c4]";
  return (
    <div className="flex h-[26px] items-stretch">
      <div className="flex w-[973px] shrink-0 items-center border border-[#85888d] bg-[#f0f0f0] whitespace-nowrap">
        <span className={`w-[78px] text-right ${blue}`}>58,100</span>
        <svg width="12" height="12" viewBox="0 0 12 12" className="ml-[6px]"><path d="M0 0h12L6 12z" fill="#145ac8" /></svg>
        <span className={`w-[63px] text-right ${blue}`}>1,400</span>
        <span className={`w-[65px] pr-[2px] text-right ${blue}`}>-2.35%</span>
        <span className={sep} />
        <span className="w-[94px] text-right">20,642,028</span>
        <span className={`w-[75px] text-right ${blue}`}>88.53%</span>
        <span className="w-[56px] pr-[2px] text-right">0.35%</span>
        <span className={sep} />
        <span className="w-[107px] text-right">1,197,984백만</span>
        <span className={sep} />
        <span className="w-[37px] text-right">호가</span>
        <span className={`w-[57px] text-right ${blue}`}>58,100</span>
        <span className={`w-[67px] pr-px text-right ${blue}`}>58,000</span>
        <span className={`ml-[6px] ${sep}`} />
        <span className="relative flex h-full w-[17px] items-center justify-end">
          <svg width="6" height="6" viewBox="0 0 6 6" className="absolute top-px left-[2px]"><path d="M0 0h6L0 6z" fill="#555" /></svg>
          시
        </span>
        <span className={`w-[56px] text-right ${blue}`}>58,500</span>
        <span className="w-[25px] text-right">고</span>
        <span className={`w-[55px] text-right ${blue}`}>58,900</span>
        <span className="w-[25px] text-right">저</span>
        <span className={`w-[56px] text-right ${blue}`}>57,600</span>
      </div>
      <button className={`${BTN} ml-[6px] w-[56px] !bg-[#f7cdc8]`}>매수</button>
      <button className={`${BTN} ml-[3px] w-[56px] !bg-[#bddcf5]`}>매도</button>
      <button className={`${BTN} ml-[3px] w-[26px]`}>평</button>
    </div>
  );
}

function ChartWindow() {
  return (
    <section className="absolute top-0 right-0 bottom-0 left-[659px] flex flex-col border-l-6 border-[#999b9e] bg-[#cfdcee] text-[16px] leading-none">
      <div className="flex h-[8px] border-r-4 border-white bg-white">
        <div className="ml-[5px] h-[6px] flex-1 border-b border-[#85888d] bg-[#c0c0c0] pl-[418px]">
          <div className="h-[5px] w-[23px] bg-[#f00]" />
        </div>
        <div className="mr-[8px] h-[6px] w-[87px] border-b border-l border-[#85888d] bg-[#d6e3f2]" />
      </div>
      <div className="flex min-h-0 flex-1 border-r-4 border-white">
        <div className="flex min-w-0 flex-1 flex-col border-t-4 border-r-3 border-t-black border-r-[#999b9e]">
          <div className="flex flex-col gap-[4px] pt-[7px] pb-[3px] pl-[5px]">
            <Toolbar />
            <QuoteBar />
          </div>
          <div className="flex min-h-0 flex-1 border-t border-r-6 border-l-5 border-white bg-white">
            <div className="relative min-w-0 flex-1 overflow-hidden border-t border-[#85888d] bg-[#c0c0c0]">
              <Plot />
              <Legend y={81} items={PRICE_LEGEND}>
                <span className="ml-[6px] bg-[#d2d2d2] px-[3px] text-[17px] leading-[18px] text-[#333]">삼성전자</span>
              </Legend>
              <Legend y={537} items={[["", ""], ["1,93", "text-[#e11414]"], ["22,09", "text-black"]]} />
              <Legend y={637} items={[["", ""], ["-8,35", "text-black"], ["-28,45", "text-[#e11414]"], ["-20,11", "text-black"]]} />
              <Legend y={759} items={[["", ""], ["44,89", "text-[#e11414]"]]} />
              <span className={`absolute left-[27px] text-[16px] leading-[20px] text-[#c8281e] ${SANS}`} style={top(114)}>최고 58,600 (08:02)</span>
              <span className={`absolute left-[38px] text-[16px] leading-[20px] text-[#0a0ac8] ${SANS}`} style={top(479)}>최저 57,600 (09:25)</span>
              <span className="absolute right-[2px] text-[17px] leading-[18px] text-[#d21e46]" style={top(305)}>당일종가</span>
            </div>
            <Axis />
          </div>
        </div>
      </div>
    </section>
  );
}

export default function App() {
  return (
    <main className="relative h-screen w-full overflow-hidden bg-[#999b9e] font-['Noto_Sans_Mono_CJK_KR','Noto_Sans_CJK_KR',monospace] text-black">
      <ShareInfo />
      <OrderWindow />
      <ScrollPopup />
      <SearchWindow query="분당 30억" count="0" checked className="top-0 left-[480px] h-[244px] border-b-2 border-[#999b9e] [&>div]:pt-[2px]" />
      <SearchWindow query="전고점 돌파" count="26" className="top-[245px] left-[479px] h-[130px] border-t-6 [&>div]:pt-[8px]">
        <tr className="h-6">
          <td className="border-r border-[#c0c4ca] pl-[2px]">카카오</td>
          <td className="pr-[42px] text-right text-[#d03028]">+1.05</td>
        </tr>
      </SearchWindow>
      <ChartWindow />
      <TradesWindow />
    </main>
  );
}
